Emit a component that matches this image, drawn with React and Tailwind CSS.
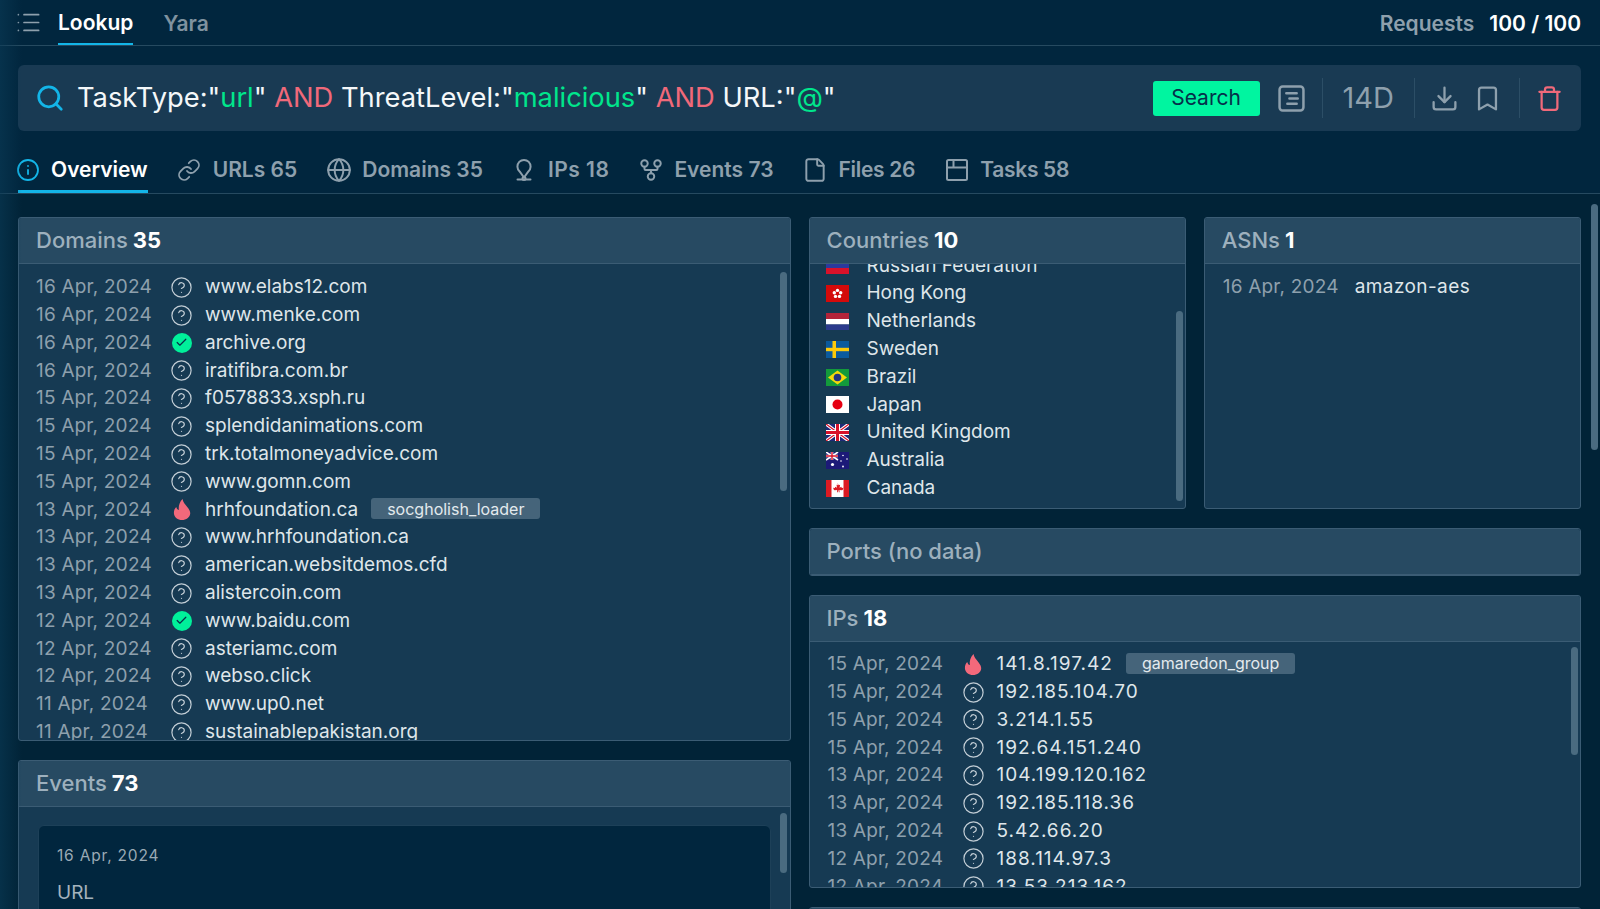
import { List, Search, Download, Bookmark, Trash, Info, Link, Globe, GitFork, File, CircleHelp, Check } from 'lucide-react';

const DOMAINS = [
  ['16 Apr, 2024', 'q', 'www.elabs12.com'],
  ['16 Apr, 2024', 'q', 'www.menke.com'],
  ['16 Apr, 2024', 'ok', 'archive.org'],
  ['16 Apr, 2024', 'q', 'iratifibra.com.br'],
  ['15 Apr, 2024', 'q', 'f0578833.xsph.ru'],
  ['15 Apr, 2024', 'q', 'splendidanimations.com'],
  ['15 Apr, 2024', 'q', 'trk.totalmoneyadvice.com'],
  ['15 Apr, 2024', 'q', 'www.gomn.com'],
  ['13 Apr, 2024', 'bad', 'hrhfoundation.ca', 'socgholish_loader'],
  ['13 Apr, 2024', 'q', 'www.hrhfoundation.ca'],
  ['13 Apr, 2024', 'q', 'american.websitdemos.cfd'],
  ['13 Apr, 2024', 'q', 'alistercoin.com'],
  ['12 Apr, 2024', 'ok', 'www.baidu.com'],
  ['12 Apr, 2024', 'q', 'asteriamc.com'],
  ['12 Apr, 2024', 'q', 'webso.click'],
  ['11 Apr, 2024', 'q', 'www.up0.net'],
  ['11 Apr, 2024', 'q', 'sustainablepakistan.org'],
];

const IPS = [
  ['15 Apr, 2024', 'bad', '141.8.197.42', 'gamaredon_group'],
  ['15 Apr, 2024', 'q', '192.185.104.70'],
  ['15 Apr, 2024', 'q', '3.214.1.55'],
  ['15 Apr, 2024', 'q', '192.64.151.240'],
  ['13 Apr, 2024', 'q', '104.199.120.162'],
  ['13 Apr, 2024', 'q', '192.185.118.36'],
  ['13 Apr, 2024', 'q', '5.42.66.20'],
  ['12 Apr, 2024', 'q', '188.114.97.3'],
  ['12 Apr, 2024', 'q', '13.53.213.162'],
];

const FlagRu = () => (
  <svg viewBox="0 0 23 17" className="w-full h-full">
    <rect width="23" height="6" fill="#fff" /><rect y="6" width="23" height="5" fill="#2b3a9c" /><rect y="11" width="23" height="6" fill="#d8122a" />
  </svg>
);
const FlagHk = () => (
  <svg viewBox="0 0 23 17" className="w-full h-full">
    <rect width="23" height="17" fill="#d40a0a" />
    <circle cx="11.5" cy="5.4" r="1.7" fill="#fff" /><circle cx="14.7" cy="7.7" r="1.7" fill="#fff" /><circle cx="13.5" cy="11.4" r="1.7" fill="#fff" /><circle cx="9.500" cy="11.4" r="1.7" fill="#fff" /><circle cx="8.3" cy="7.7" r="1.7" fill="#fff" />
  </svg>
);
const FlagNl = () => (
  <svg viewBox="0 0 23 17" className="w-full h-full">
    <rect width="23" height="6" fill="#b3243a" /><rect y="6" width="23" height="5.5" fill="#fff" /><rect y="11.5" width="23" height="5.5" fill="#2b3a8c" />
  </svg>
);
const FlagSe = () => (
  <svg viewBox="0 0 23 17" className="w-full h-full">
    <rect width="23" height="17" fill="#0b5a9e" /><rect x="6.5" width="3.5" height="17" fill="#fcc90a" /><rect y="6.8" width="23" height="3.4" fill="#fcc90a" />
  </svg>
);
const FlagBr = () => (
  <svg viewBox="0 0 23 17" className="w-full h-full">
    <rect width="23" height="17" fill="#139a3b" /><path d="M11.5 1.5L21 8.5 11.5 15.5 2 8.5z" fill="#f6d90a" /><circle cx="11.5" cy="8.5" r="3.8" fill="#24347f" />
  </svg>
);
const FlagJp = () => (
  <svg viewBox="0 0 23 17" className="w-full h-full">
    <rect width="23" height="17" fill="#fff" /><circle cx="11.5" cy="8.5" r="5" fill="#e60012" />
  </svg>
);
const FlagUk = () => (
  <svg viewBox="0 0 23 17" className="w-full h-full">
    <rect width="23" height="17" fill="#1f2a78" />
    <path d="M0 0L23 17M23 0L0 17" stroke="#fff" strokeWidth="3.4" />
    <path d="M0 0L23 17M23 0L0 17" stroke="#d8122a" strokeWidth="1.2" />
    <path d="M11.5 0V17M0 8.5H23" stroke="#fff" strokeWidth="5" />
    <path d="M11.5 0V17M0 8.5H23" stroke="#d8122a" strokeWidth="3" />
  </svg>
);
const FlagAu = () => (
  <svg viewBox="0 0 23 17" className="w-full h-full">
    <rect width="23" height="17" fill="#1c1a78" />
    <path d="M0 0L12 8M12 0L0 8" stroke="#fff" strokeWidth="1.6" />
    <path d="M6 0V8M0 4H12" stroke="#fff" strokeWidth="2.6" />
    <path d="M6 0V8M0 4H12" stroke="#d8122a" strokeWidth="1.4" />
    <circle cx="6.5" cy="12.5" r="1.6" fill="#fff" />
    <circle cx="17" cy="3.5" r=".8" fill="#fff" /><circle cx="21" cy="7" r=".8" fill="#fff" /><circle cx="15" cy="9" r=".8" fill="#fff" /><circle cx="17" cy="14.5" r=".9" fill="#fff" />
  </svg>
);
const FlagCa = () => (
  <svg viewBox="0 0 23 17" className="w-full h-full">
    <rect width="23" height="17" fill="#fff" /><rect width="5.5" height="17" fill="#dc1a22" /><rect x="17.5" width="5.5" height="17" fill="#dc1a22" />
    <path d="M11.5 3l1.2 2.3 1.4-.6-.5 3 1.7-1 .5 1.2 1.7-.2-.7 2-.8.5-2.6-.2.2 2.2h-.8l-.3-2h-.4l-.3 2h-.8l.2-2.2-2.6.2-.8-.5-.7-2 1.7.2.5-1.2 1.7 1-.5-3 1.4.6z" fill="#dc1a22" />
  </svg>
);

const COUNTRIES = [
  ['Russian Federation', FlagRu],
  ['Hong Kong', FlagHk],
  ['Netherlands', FlagNl],
  ['Sweden', FlagSe],
  ['Brazil', FlagBr],
  ['Japan', FlagJp],
  ['United Kingdom', FlagUk],
  ['Australia', FlagAu],
  ['Canada', FlagCa],
];

const NoteIcon = ({ className }) => (
  <svg viewBox="0 0 26 26" fill="none" stroke="currentColor" strokeWidth="2.4" strokeLinecap="round" className={className}>
    <rect x="1.5" y="1.5" width="23" height="23" rx="3" />
    <path d="M8 8h10M11 13h8M9 18h9" />
  </svg>
);

const PinIcon = ({ className }) => (
  <svg viewBox="0 0 18 24" fill="none" stroke="currentColor" strokeWidth="2" strokeLinecap="round" strokeLinejoin="round" className={className}>
    <path d="M9 19.5L4.6 13.4A6.6 6.6 0 1 1 13.4 13.4L9 19.5z" />
    <path d="M2.5 21.5h13" />
    <circle cx="9" cy="20.5" r="1.5" />
  </svg>
);

const TasksIcon = ({ className }) => (
  <svg viewBox="0 0 22 22" fill="none" stroke="currentColor" strokeWidth="2" className={className}>
    <rect x="1" y="1" width="20" height="20" rx="1.5" />
    <path d="M1 8.5h20M7.5 1v7.5" />
  </svg>
);

const Flame = () => (
  <svg viewBox="0 0 16 20" className="w-[18px] h-[21px]" fill="#f3697b">
    <path d="M8.500 0C9 3 11 5 13 7.500C15 10 16 12 15.800 14C15.500 17.500 12 20 8 20C4 20 .5 17.500 .3 13.500C.2 11 1 9 2.500 7.500C3 9 3.500 10 5 10.500C4.500 7 5.500 3 8.500 0z" />
  </svg>
);

const StatusIcon = ({ kind }) => {
  if (kind === 'ok') {
    return (
      <span className="w-[20px] h-[20px] rounded-full bg-[#00f09a] flex items-center justify-center">
        <Check className="w-[13px] h-[13px] text-[#07304a]" strokeWidth={2.2} />
      </span>
    );
  }
  if (kind === 'bad') return <Flame />;
  return <CircleHelp className="w-[23px] h-[23px] text-[#c3ced6]" strokeWidth={1.25} />;
};

const Row = ({ date, kind, name, tag, spaced }) => (
  <div className="flex items-center h-[27.8px] text-[19px] whitespace-nowrap shrink-0">
    <span className="w-[125px] tracking-[0.2px] text-[#8ea0ad]">{date}</span>
    <span className="w-[41px] flex justify-center shrink-0"><StatusIcon kind={kind} /></span>
    <span className={spaced ? 'ml-[3px] tracking-[1px] text-[#dfe6ea]' : 'ml-[3px] text-[#dfe6ea]'}>{name}</span>
    {tag && (
      <span className="ml-[13px] mb-[2px] h-[21px] px-[16px] flex items-center rounded-[3px] bg-[#45647a] text-[16px] text-[#e3eaee]">{tag}</span>
    )}
  </div>
);

const Panel = ({ title, count, className, children }) => (
  <section className={`flex flex-col overflow-hidden rounded-[3px] border border-[#3b5c74] bg-[#163a53] ${className}`}>
    <header className="h-[46px] shrink-0 flex items-center px-[17px] bg-[#274a62] border-b border-[#3b5c74] text-[22px] font-medium text-[#9db0bd]">
      <span>{title}</span>
      {count && <span className="ml-[5px] font-bold text-white">{count}</span>}
    </header>
    {children}
  </section>
);

const Thumb = ({ className }) => (
  <span className={`absolute w-[7px] rounded-full bg-[#4a6b80] ${className}`} />
);

const TABS = [
  { icon: Link, size: 'w-[24px] h-[24px]', label: 'URLs 65', track: '' },
  { icon: Globe, size: 'w-[26px] h-[26px]', label: 'Domains 35', track: '' },
  { icon: PinIcon, size: 'w-[18px] h-[24px]', label: 'IPs 18', track: 'tracking-[0.5px]' },
  { icon: GitFork, size: 'w-[26px] h-[26px]', label: 'Events 73', track: '' },
  { icon: File, size: 'w-[26px] h-[26px]', label: 'Files 26', track: 'tracking-[-0.3px]' },
  { icon: TasksIcon, size: 'w-[22px] h-[22px]', label: 'Tasks 58', track: 'tracking-[-0.3px]' },
];

export default function App() {
  return (
    <div className="relative h-[909px] overflow-hidden flex flex-col bg-[#012337] text-white font-['Inter','Liberation_Sans',sans-serif]">
      {/* Barra superior */}
      <div className="h-[46px] shrink-0 flex items-center justify-between pl-[18px] pr-[19px] bg-[#01263e] border-b border-[#264a60]">
        <div className="flex items-center h-full">
          <List className="-ml-[3px] w-[27px] h-[27px] text-[#8ea0ad]" strokeWidth={1.5} />
          <div className="ml-[16px] h-full pt-[3px] flex items-center border-b-2 border-[#13b5e8] text-[21px] font-semibold">Lookup</div>
          <div className="ml-[30px] pt-[2px] text-[21px] font-semibold text-[#7f929f]">Yara</div>
        </div>
        <div className="pt-[2px] text-[21px] font-semibold">
          <span className="text-[#8ea0ad] mr-[15px]">Requests</span>100 / 100
        </div>
      </div>

      {/* Buscador + tabs */}
      <div className="shrink-0 bg-[#01263e] border-b border-[#264a60] pt-[19px] pl-[18px] pr-[19px]">
        <div className="h-[66px] flex items-center pl-[17px] pr-[18px] rounded-[6px] bg-[#193a53]">
          <Search className="w-[30px] h-[30px] text-[#13b5e8]" strokeWidth={2.2} />
          <div className="ml-[12px] flex-1 text-[27.3px] whitespace-nowrap text-[#f4f7f9]">
            TaskType:"<span className="text-[#00e68c]">url</span>" <span className="text-[#f0697a]">AND</span> ThreatLevel:"<span className="text-[#00e68c]">malicious</span>" <span className="text-[#f0697a]">AND</span> URL:"<span className="text-[#00e68c]">@</span>"
          </div>
          <button className="w-[107px] h-[35px] rounded-[3px] bg-[#00f5a0] text-[#06304a] text-[21px]">Search</button>
          <NoteIcon className="ml-[18px] w-[27px] h-[27px] text-[#8ea0ad]" />
          <span className="ml-[17px] w-px h-[40px] bg-[#2c4e66]" />
          <span className="ml-[20px] text-[29px] text-[#8ea0ad]">14D</span>
          <span className="ml-[20px] w-px h-[40px] bg-[#2c4e66]" />
          <Download className="ml-[15px] w-[29px] h-[29px] text-[#8ea0ad]" strokeWidth={1.9} />
          <Bookmark className="ml-[14px] w-[29px] h-[29px] text-[#8ea0ad]" strokeWidth={1.9} />
          <span className="ml-[17px] w-px h-[40px] bg-[#2c4e66]" />
          <Trash className="ml-[16px] w-[27px] h-[27px] text-[#f0697a]" strokeWidth={2} />
        </div>

        <div className="mt-[18px] h-[44px] flex items-stretch gap-[31px] text-[21px] font-semibold">
          <div className="flex items-center gap-[13px] border-b-[3px] border-[#13b5e8]">
            <Info className="w-[24px] h-[24px] -mx-[2px] text-[#13b5e8]" strokeWidth={1.8} />
            <span>Overview</span>
          </div>
          {TABS.map(({ icon: Icon, size, label, track }) => (
            <div key={label} className="flex items-center gap-[13px] pb-[3px] text-[#8ea0ad]">
              <span className="w-[21px] flex justify-center">
                <Icon className={`${size} shrink-0`} strokeWidth={1.8} />
              </span>
              <span className={track}>{label}</span>
            </div>
          ))}
        </div>
      </div>

      {/* Contenido */}
      <div className="flex-1 min-h-0 pt-[23px] pl-[18px] pr-[19px] grid grid-cols-2 gap-x-[18px] content-start">
        <div className="flex flex-col gap-[19px]">
          <Panel title="Domains" count="35" className="relative h-[524px]">
            <div className="flex-1 overflow-hidden pt-[9.5px] pl-[17px] flex flex-col">
              {DOMAINS.map(([date, kind, name, tag]) => (
                <Row key={name} date={date} kind={kind} name={name} tag={tag} />
              ))}
            </div>
            <Thumb className="right-[3px] top-[54px] h-[219px]" />
          </Panel>
          <Panel title="Events" count="73" className="relative h-[300px]">
            <div className="pt-[18px] px-[19px]">
              <div className="h-[200px] rounded-[6px] border border-[#1d4058] bg-[#01263e] pt-[18px] px-[18px]">
                <div className="text-[15.5px] tracking-[0.8px] text-[#9aaab5]">16 Apr, 2024</div>
                <div className="mt-[12px] text-[19px] text-[#a5b3bd]">URL</div>
              </div>
            </div>
            <Thumb className="right-[3px] top-[52px] h-[60px]" />
          </Panel>
        </div>

        <div className="flex flex-col gap-[19px]">
          <div className="grid grid-cols-2 gap-x-[18px]">
            <Panel title="Countries" count="10" className="relative h-[292px]">
              <div className="flex-1 overflow-hidden">
                <div className="-mt-[12px] pl-[16px]">
                  {COUNTRIES.map(([name, Flag]) => (
                    <div key={name} className="flex items-center h-[27.8px] text-[19px] text-[#dfe6ea]">
                      <span className="w-[23px] h-[17px] shrink-0"><Flag /></span>
                      <span className="ml-[18px]">{name}</span>
                    </div>
                  ))}
                </div>
              </div>
              <Thumb className="right-[2px] top-[93px] h-[190px]" />
            </Panel>
            <Panel title="ASNs" count="1" className="h-[292px]">
              <div className="mt-[9px] pl-[18px] flex items-center h-[27.8px] text-[19px] whitespace-nowrap">
                <span className="w-[132px] tracking-[0.2px] text-[#8ea0ad]">16 Apr, 2024</span>
                <span className="tracking-[0.4px] text-[#dfe6ea]">amazon-aes</span>
              </div>
            </Panel>
          </div>
          <Panel title="Ports (no data)" className="h-[48px]" />
          <Panel title="IPs" count="18" className="relative h-[293px]">
            <div className="flex-1 overflow-hidden pt-[8.5px] pl-[18px] flex flex-col">
              {IPS.map(([date, kind, name, tag]) => (
                <Row key={name} date={date} kind={kind} name={name} tag={tag} spaced />
              ))}
            </div>
            <Thumb className="right-[2px] top-[51px] h-[108px]" />
          </Panel>
          <Panel title="" className="h-[40px]" />
        </div>
      </div>

      {/* Scroll de la pagina */}
      <Thumb className="right-[2px] top-[204px] h-[246px]" />
      <div className="absolute left-0 inset-y-0 w-[22px] bg-linear-to-r from-[#0a3a55]/60 to-transparent pointer-events-none" />
    </div>
  );
}
